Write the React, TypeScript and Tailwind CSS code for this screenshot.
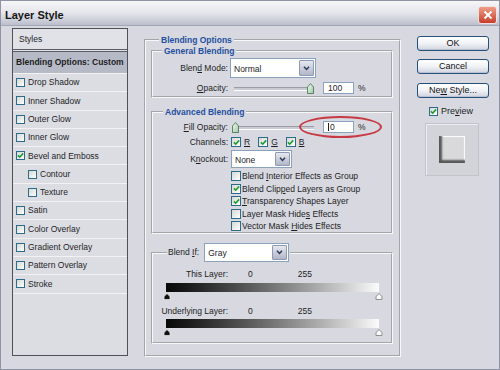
import React from 'react';

const U = ({ c }: { c: string }) => <span className="underline underline-offset-[1px]">{c}</span>;

const Box = ({ on, small }: { on?: boolean; small?: boolean }) => (
  <span
    className={`flex shrink-0 items-center justify-center border border-[#2d6b8c] bg-gradient-to-br from-[#d5d8d2] to-white ${
      small ? 'h-[9px] w-[9px]' : 'h-[10px] w-[10px]'
    }`}
  >
    {on && (
      <svg viewBox="0 0 8 8" className="h-[7px] w-[7px]">
        <path d="M1 3.8 L3.1 5.9 L7 1.6" fill="none" stroke="#1e9a33" strokeWidth="1.8" />
      </svg>
    )}
  </span>
);

const Select = ({ value, w }: { value: string; w: string }) => (
  <div className={`flex h-full items-stretch border border-[#8aa2bc] bg-white ${w}`}>
    <span className="flex flex-1 items-center pl-[3px] pt-[2px]">{value}</span>
    <span className="m-[1px] flex w-[15px] items-center justify-center rounded-[1px] border border-[#8f99b3] bg-gradient-to-b from-[#e6e8ef] to-[#b1b6c8]">
      <svg viewBox="0 0 8 6" className="h-[5px] w-[7px]">
        <path d="M1 1 L4 4.2 L7 1" fill="none" stroke="#2c3a58" strokeWidth="1.8" />
      </svg>
    </span>
  </div>
);

const Thumb = () => (
  <svg viewBox="0 0 7 11" className="h-[11px] w-[7px] shrink-0">
    <defs>
      <linearGradient id="tg" x1="0" y1="0" x2="1" y2="1">
        <stop offset="0" stopColor="#f2faef" />
        <stop offset="1" stopColor="#9fcaa0" />
      </linearGradient>
    </defs>
    <path d="M0.5 4 L3.5 0.6 L6.5 4 V10.5 H0.5 Z" fill="url(#tg)" stroke="#3d6b55" strokeWidth="0.8" />
  </svg>
);

const Track = () => <span className="h-[3px] flex-1 border-t border-[#9b9ca6] bg-[#c9cad2] shadow-[0_1px_0_#fff]" />;

const Field = ({ children }: { children: React.ReactNode }) => (
  <span className="flex h-[12px] w-[31px] items-center border border-[#8aa2bc] bg-white pl-[4px]">{children}</span>
);

const House = ({ dark }: { dark?: boolean }) => (
  <svg viewBox="0 0 8 8" className="h-[7px] w-[8px]">
    <path
      d="M0.6 7.4 V4 L4 0.7 L7.4 4 V7.4 Z"
      fill={dark ? '#111' : '#fafafa'}
      stroke={dark ? '#f0f0f0' : '#6a6a6a'}
      strokeWidth="0.8"
    />
  </svg>
);

const Btn = ({ children }: { children: React.ReactNode }) => (
  <div className="flex h-[15px] w-[72px] items-center justify-center rounded-[3px] border border-[#27507a] bg-gradient-to-b from-white via-[#f1f2f6] to-[#cfd3df] text-[9px] text-[#111] shadow-[inset_0_-1px_0_#b9c0d4]">
    <span>{children}</span>
  </div>
);

const styleRows: [string, boolean, boolean][] = [
  ['Drop Shadow', false, false],
  ['Inner Shadow', false, false],
  ['Outer Glow', false, false],
  ['Inner Glow', false, false],
  ['Bevel and Emboss', true, false],
  ['Contour', false, true],
  ['Texture', false, true],
  ['Satin', false, false],
  ['Color Overlay', false, false],
  ['Gradient Overlay', false, false],
  ['Pattern Overlay', false, false],
  ['Stroke', false, false],
];

const legend = 'text-[8.5px] font-bold leading-[10px] text-[#1f4f9f]';
const groove = 'border-2 [border-style:groove] border-[#f7f8fa]';

export default function App() {
  return (
    <div className="flex h-[370px] w-[500px] flex-col border border-[#8f93a4] bg-[#d8d9e0] font-['Liberation_Sans',Arial,sans-serif] text-[8.5px] leading-none text-[#1d1d1f]">
      {/* title bar */}
      <div className="flex h-[25px] shrink-0 items-center justify-between border-b border-[#a3a6b4] bg-gradient-to-b from-[#f7f7f9] via-[#e4e5eb] to-[#bcbfcc] pl-[4px] pr-[2px]">
        <span className="pt-[4px] text-[11px] font-bold text-[#151515]">Layer Style</span>
        <span className="mt-[3px] flex h-[18px] w-[19px] items-center justify-center rounded-[3px] border border-[#f4e0dc] bg-gradient-to-b from-[#ee9c88] to-[#c63d2a]">
          <svg viewBox="0 0 10 10" className="h-[10px] w-[10px]">
            <path d="M1.5 1.5 L8.5 8.5 M8.5 1.5 L1.5 8.5" stroke="#fff" strokeWidth="1.8" />
          </svg>
        </span>
      </div>

      <div className="flex items-start pl-[11px] pt-[2px]">
        {/* styles list */}
        <div className="flex h-[328px] w-[116px] shrink-0 flex-col border border-[#4f5058] bg-[#dcdde3]">
          <div className="flex h-[23px] shrink-0 items-center border-b-[3px] border-double border-[#5b5c64] bg-[#e1e2e7] pl-[6px]">Styles</div>
          <div className="flex h-[22px] shrink-0 items-center border-b border-[#f2f2f5] bg-[#b6bac7] pl-[3px] font-bold">Blending Options: Custom</div>
          {styleRows.map(([name, on, sub]) => (
            <div
              key={name}
              className={`flex h-[18.3px] shrink-0 items-center gap-[3px] border-b border-[#f2f2f5] ${sub ? 'pl-[15px]' : 'pl-[3px]'}`}
            >
              <Box on={on} small />
              <span>{name}</span>
            </div>
          ))}
        </div>

        {/* blending options */}
        <fieldset className={`ml-[16px] mt-[7px] h-[322px] w-[257px] shrink-0 px-[5px] ${groove}`}>
          <legend className={`ml-[8px] px-[2px] ${legend}`}>Blending Options</legend>

          <fieldset className={`mt-[1px] h-[52px] w-[242px] ${groove}`}>
            <legend className={`ml-[9px] px-[2px] ${legend}`}>General Blending</legend>
            <div className="mt-[2px] flex h-[20px] items-center">
              <span className="w-[75px] text-right">
                Blen<U c="d" /> Mode:
              </span>
              <div className="ml-[2px] h-[20px]">
                <Select value="Normal" w="w-[86px]" />
              </div>
            </div>
            <div className="mt-[4px] flex h-[12px] items-center">
              <span className="w-[75px] text-right">
                <U c="O" />pacity:
              </span>
              <span className="ml-[6px] flex w-[80px] items-center">
                <Track />
                <Thumb />
              </span>
              <span className="ml-[9px]">
                <Field>100</Field>
              </span>
              <span className="ml-[4px]">%</span>
            </div>
          </fieldset>

          <fieldset className={`mt-[9px] h-[127px] w-[242px] ${groove}`}>
            <legend className={`ml-[10px] px-[2px] ${legend}`}>Advanced Blending</legend>
            <div className="relative mt-[4px] flex h-[12px] items-center">
              <span className="w-[75px] text-right">
                <U c="F" />ill Opacity:
              </span>
              <span className="ml-[4px] flex w-[82px] items-center">
                <Thumb />
                <Track />
              </span>
              <span className="ml-[9px]">
                <Field>
                  <span className="border-l border-[#222] pl-[1px] leading-[8px]">0</span>
                </Field>
              </span>
              <span className="ml-[4px]">%</span>
              <span className="absolute left-[146px] top-[-5px] h-[22px] w-[83px] rounded-[50%] border-2 border-[#c73a44]" />
            </div>
            <div className="mt-[3px] flex h-[12px] items-center">
              <span className="w-[75px] text-right">Channels:</span>
              <span className="ml-[3px] flex items-center gap-[3px]">
                <Box on />
                <U c="R" />
              </span>
              <span className="ml-[8px] flex items-center gap-[3px]">
                <Box on />
                <U c="G" />
              </span>
              <span className="ml-[8px] flex items-center gap-[3px]">
                <Box on />
                <U c="B" />
              </span>
            </div>
            <div className="mt-[2px] flex h-[18px] items-center">
              <span className="w-[75px] text-right">
                K<U c="n" />ockout:
              </span>
              <div className="ml-[3px] h-[18px]">
                <Select value="None" w="w-[61px]" />
              </div>
            </div>
            <div className="mt-[2px] flex flex-col pl-[78px]">
              {[
                [false, <>Blend <U c="I" />nterior Effects as Group</>],
                [true, <>Blend Clip<U c="p" />ed Layers as Group</>],
                [true, <><U c="T" />ransparency Shapes Layer</>],
                [false, <>Layer Mask Hide<U c="s" /> Effects</>],
                [false, <>Vector Mask <U c="H" />ides Effects</>],
              ].map(([on, label], i) => (
                <div key={i} className="flex h-[12.5px] items-center gap-[1px]">
                  <Box on={on as boolean} />
                  <span>{label as React.ReactNode}</span>
                </div>
              ))}
            </div>
          </fieldset>

          <fieldset className={`mt-[9px] h-[101px] w-[242px] ${groove}`}>
            <legend className="ml-[14px] flex h-[19px] items-center px-[1px]">
              <span>
                Blend <U c="I" />f:
              </span>
              <div className="ml-[5px] h-[19px]">
                <Select value="Gray" w="w-[85px]" />
              </div>
            </legend>
            {['This Layer:', 'Underlying Layer:'].map((label, i) => (
              <div key={label} className={i === 0 ? 'mt-[7px]' : 'mt-[6px]'}>
                <div className="flex h-[10px] items-center">
                  <span className="w-[75px] text-right">{label}</span>
                  <span className="ml-[20px]">0</span>
                  <span className="ml-[45px]">255</span>
                </div>
                <div className={`ml-[13px] h-[9px] w-[213px] bg-gradient-to-r from-[#080808] to-[#fbfbfb] ${i === 0 ? 'mt-[4px]' : 'mt-[3px]'}`} />
                <div className="ml-[10px] mt-[1px] flex w-[220px] justify-between">
                  <House dark />
                  <House />
                </div>
              </div>
            ))}
          </fieldset>
        </fieldset>

        {/* buttons */}
        <div className="ml-[16px] mt-[8px] flex w-[72px] shrink-0 flex-col">
          <Btn>OK</Btn>
          <div className="mt-[8px]">
            <Btn>Cancel</Btn>
          </div>
          <div className="mt-[9px]">
            <Btn>
              Ne<U c="w" /> Style...
            </Btn>
          </div>
          <div className="ml-[12px] mt-[8px] flex h-[10px] items-center gap-[3px] text-[9px]">
            <Box on small />
            <span>
              Pre<U c="v" />iew
            </span>
          </div>
          <div className="ml-[8px] mt-[7px] flex h-[53px] w-[54px] items-center justify-center border border-[#c2c4cc] bg-[#d3d4da] shadow-[inset_1px_1px_0_#eeeef2]">
            <div className="h-[27px] w-[26px] bg-[#d9d9dc] shadow-[inset_3px_-3px_2px_rgba(0,0,0,0.6),inset_-1px_1px_1px_rgba(255,255,255,0.95)]" />
          </div>
        </div>
      </div>
    </div>
  );
}
